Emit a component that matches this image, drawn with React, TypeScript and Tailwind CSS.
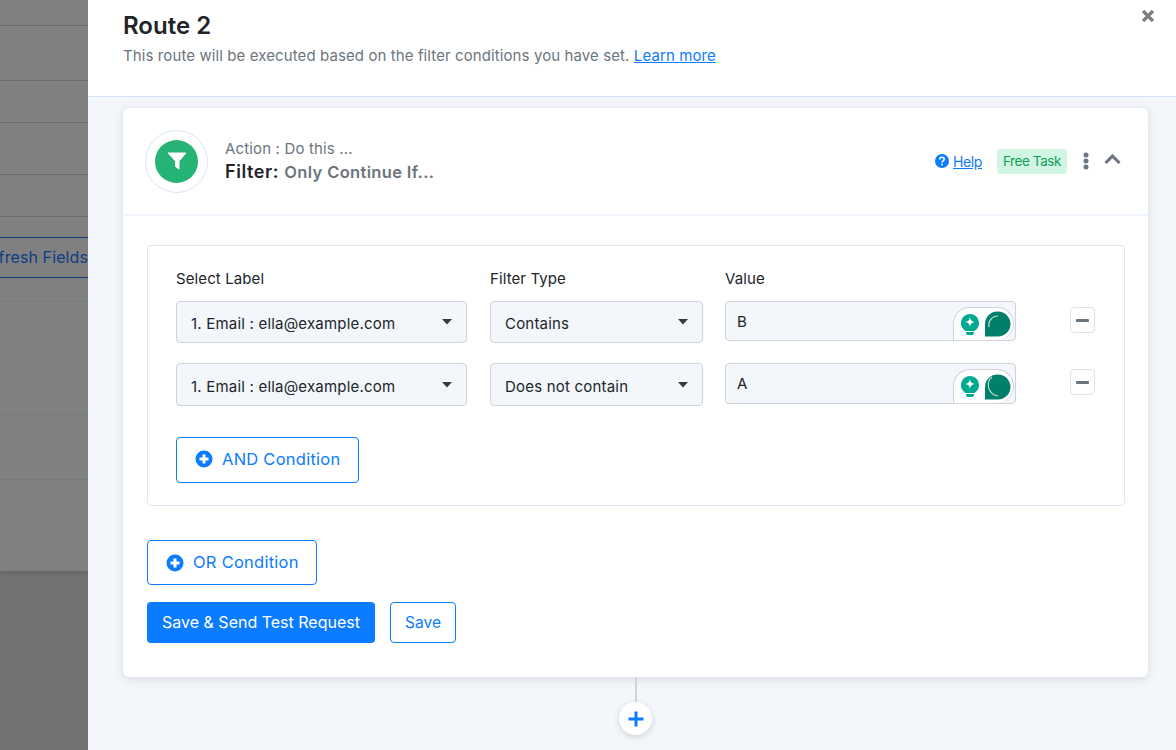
import React from "react";

const font = { fontFamily: 'Inter, "Noto Sans", sans-serif' };

function Caret() {
  return (
    <svg width="10" height="6" viewBox="0 0 10 6" className="shrink-0">
      <path d="M0 0h10L5 5.5z" fill="#343a40" />
    </svg>
  );
}

function PlusCircle({ size = 18 }: { size?: number }) {
  return (
    <svg width={size} height={size} viewBox="0 0 18 18" className="shrink-0">
      <circle cx="9" cy="9" r="8.5" fill="#0b7bff" />
      <path d="M9 4.5v9M4.5 9h9" stroke="#fff" strokeWidth="3" />
    </svg>
  );
}

function Select({ text, w, h }: { text: string; w: string; h: string }) {
  return (
    <div className={`${w} ${h} flex items-center justify-between rounded-[4px] border border-[#ced4da] bg-[#f3f6fa] pl-[14px] pr-[14px] text-[15px] text-[#212529]`}>
      <span className="pt-[5px] tracking-[0.2px] whitespace-nowrap">{text}</span>
      <Caret />
    </div>
  );
}

function ValueInput({ text, flip, h }: { text: string; flip?: boolean; h: string }) {
  return (
    <div className={`w-[291px] ${h} flex items-stretch justify-between rounded-[4px] border border-[#ced4da] bg-[#f3f6fa] text-[15px] text-[#212529]`}>
      <span className="pl-[11px] pt-[9px] leading-[22px]">{text}</span>
      <div className="mt-[5px] mr-[1px] flex w-[61px] items-center gap-[6px] rounded-tl-[18px] rounded-tr-[18px] rounded-br-[18px] border-l border-t border-r border-[#ced4da] bg-white pl-[7px]">
        <svg width="18" height="21" viewBox="0 0 18 21" className="shrink-0">
          <path d="M9 0a9 9 0 0 1 5 16.400V17H4v-.6A9 9 0 0 1 9 0z" fill="#00a98f" />
          <path d="M9 3c.6 3.400 1.600 4.400 5 5-3.400.6-4.400 1.600-5 5-.6-3.400-1.600-4.400-5-5 3.400-.6 4.400-1.600 5-5z" fill="#fff" />
          <path d="M5 18h8v1a2 2 0 0 1-2 2H7a2 2 0 0 1-2-2z" fill="#00a98f" />
        </svg>
        <svg width="26" height="26" viewBox="0 0 26 26" className="shrink-0">
          <path d="M13 0.500a12.500 12.500 0 0 1 0 25H0V13A12.500 12.500 0 0 1 13 0.500z" fill="#00806a" />
          {flip ? (
            <path d="M7 3C1 8 2 20 13 22" stroke="#b9dcd4" strokeWidth="1.200" fill="none" />
          ) : (
            <path d="M4 16C3 10 7 5 13 5" stroke="#b9dcd4" strokeWidth="1.200" fill="none" />
          )}
        </svg>
      </div>
    </div>
  );
}

function Minus() {
  return (
    <div className="flex h-[26px] w-[25px] items-center justify-center rounded-[4px] border border-[#dee2e6] bg-white">
      <div className="h-[3px] w-[13px] rounded-[1px] bg-[#6c757d]" />
    </div>
  );
}

function Row({ first, second, value, flip, mt, h }: { first: string; second: string; value: string; flip?: boolean; mt: string; h: string }) {
  return (
    <div className={`flex items-start ${mt}`}>
      <Select text={first} w="w-[291px]" h={h} />
      <div className="ml-[23px]">
        <Select text={second} w="w-[213px]" h={h} />
      </div>
      <div className="ml-[22px]">
        <ValueInput text={value} flip={flip} h={h === "h-[42px]" ? "h-[40px]" : "h-[41px]"} />
      </div>
      <div className="ml-[54px] mt-[6px]">
        <Minus />
      </div>
    </div>
  );
}

const rows = ["h-[26px]", "h-[55px]", "h-[42px]", "h-[52px]", "h-[42px]"];

export default function App() {
  return (
    <div className="flex h-[750px] w-[1176px] overflow-hidden" style={font}>
      <div className="flex h-full w-[88px] shrink-0 flex-col bg-[#737373]">
        <div className="flex h-[571px] flex-col bg-[#808080] shadow-[0_1px_6px_rgba(0,0,0,0.2)]">
          {rows.map((r) => (
            <div key={r} className={`${r} border-b border-[#6b6b6b]`} />
          ))}
          <div className="mt-[20px] flex h-[41px] items-center justify-end overflow-hidden border-y border-[#0b3d7a] pb-[2px] text-[16px] tracking-[0.1px] whitespace-nowrap text-[#0b3d80]">
            fresh Fields
          </div>
          <div className="h-[24px] border-b border-[#767a7e]" />
          <div className="h-[113px] border-b border-[#767a7e]" />
          <div className="h-[65px] border-b border-[#767a7e]" />
        </div>
      </div>
      <div className="relative flex h-full flex-1 flex-col bg-[#f3f6fa]">
        <header className="h-[97px] shrink-0 border-b border-[#d6e4fb] bg-white pl-[35px] pt-[10px]">
          <h1 className="text-[24px] leading-[32px] font-semibold text-[#212529]">Route 2</h1>
          <p className="mt-[3px] text-[15px] leading-[22px] tracking-[0.1px] whitespace-nowrap text-[#6c757d]">
            This route will be executed based on the filter conditions you have set.{" "}
            <a className="text-[#0b7bff] underline">Learn more</a>
          </p>
        </header>
        <button className="absolute top-[9px] left-[1053px] text-[#7b7f84]">
          <svg width="14" height="14" viewBox="0 0 14 14">
            <path d="M2 2l10 10M12 2L2 12" stroke="currentColor" strokeWidth="3.200" />
          </svg>
        </button>

        <main className="ml-[35px] flex w-[1025px] flex-1 flex-col items-center pt-[11px]">
          <section className="h-[569px] w-[1025px] shrink-0 rounded-[6px] bg-white shadow-[0_2px_10px_rgba(60,70,90,0.16)]">
            <div className="flex h-[108px] items-center border-b-2 border-[#f0f5fd] pr-[27px] pl-[22px]">
              <div className="flex h-[63px] w-[63px] items-center justify-center rounded-full border border-[#d6e4fb]">
                <div className="flex h-[43px] w-[43px] items-center justify-center rounded-full bg-[#25b475]">
                  <svg width="20" height="20" viewBox="0 0 20 20">
                    <path d="M1 2h18l-7 8v8l-3.500-2.500V10z" fill="#fff" stroke="#fff" strokeWidth="1" strokeLinejoin="round" />
                  </svg>
                </div>
              </div>
              <div className="ml-[17px] flex-1 pt-[2px]">
                <div className="-mt-[2px] text-[15px] leading-[22px] tracking-[0.15px] text-[#6c757d]">Action : Do this ...</div>
                <div className="text-[18px] leading-[24px] font-semibold tracking-[0.6px] text-[#212529]">
                  Filter: <span className="text-[16.500px] tracking-[0.35px] text-[#6c757d]">Only Continue If...</span>
                </div>
              </div>
              <div className="flex items-center">
                <svg width="14" height="14" viewBox="0 0 14 14" className="mr-[4px]">
                  <circle cx="7" cy="7" r="7" fill="#0b7bff" />
                  <path d="M4.800 5.400C4.800 4 5.800 3.200 7 3.200s2.200.8 2.200 2c0 1.600-2.200 1.600-2.200 3.200" stroke="#fff" strokeWidth="1.600" fill="none" />
                  <circle cx="7" cy="10.500" r="1" fill="#fff" />
                </svg>
                <a className="text-[14px] tracking-[-0.4px] text-[#0b7bff] underline">Help</a>
                <span className="ml-[15px] flex h-[25px] w-[70px] items-center justify-center rounded-[4px] bg-[#d1f7e4] text-[13.500px] tracking-[-0.4px] whitespace-nowrap text-[#0f9d58]">
                  Free Task
                </span>
                <svg width="6" height="18" viewBox="0 0 6 18" className="ml-[16px]">
                  <circle cx="3" cy="3" r="2.500" fill="#6c757d" />
                  <circle cx="3" cy="9" r="2.500" fill="#6c757d" />
                  <circle cx="3" cy="15" r="2.500" fill="#6c757d" />
                </svg>
                <svg width="17" height="10" viewBox="0 0 17 10" className="mb-[5px] ml-[15px]">
                  <path d="M1.500 9L8.500 2l7 7" stroke="#6c757d" strokeWidth="3" fill="none" />
                </svg>
              </div>
            </div>

            <div className="px-[24px] pt-[29px]">
              <div className="h-[261px] w-[978px] rounded-[4px] border border-[#dee5f3] px-[28px] pt-[22px]">
                <div className="flex text-[15px] leading-[22px] tracking-[0.1px] text-[#212529]">
                  <span className="w-[314px]">Select Label</span>
                  <span className="w-[235px]">Filter Type</span>
                  <span>Value</span>
                </div>
                <Row mt="mt-[11px]" first="1. Email : ella@example.com" second="Contains" value="B" h="h-[42px]" />
                <Row mt="mt-[20px]" first="1. Email : ella@example.com" second="Does not contain" value="A" flip h="h-[43px]" />
                <button className="mt-[31px] flex h-[46px] w-[183px] items-center justify-start gap-[9px] rounded-[4px] border border-[#0b7bff] pb-[2px] pl-[18px] text-[16.500px] tracking-[0.25px] whitespace-nowrap text-[#0b7bff]">
                  <PlusCircle />
                  AND Condition
                </button>
              </div>
              <button className="mt-[34px] flex h-[45px] w-[170px] items-center justify-start gap-[9px] rounded-[4px] border border-[#0b7bff] pl-[18px] text-[16.500px] tracking-[0.25px] whitespace-nowrap text-[#0b7bff]">
                <PlusCircle />
                OR Condition
              </button>
              <div className="mt-[17px] flex gap-[15px]">
                <button className="h-[41px] w-[228px] rounded-[4px] bg-[#0b7bff] pb-[2px] text-[16px] whitespace-nowrap text-white">
                  Save &amp; Send Test Request
                </button>
                <button className="h-[41px] w-[66px] rounded-[4px] border border-[#0b7bff] text-[15.500px] text-[#0b7bff]">
                  Save
                </button>
              </div>
            </div>
          </section>
          <div className="h-[25px] w-[2px] shrink-0 bg-[#ced4da]" />
          <button className="flex h-[33px] w-[33px] shrink-0 items-center justify-center rounded-full bg-white shadow-[0_2px_6px_rgba(60,70,90,0.2)]">
            <svg width="16" height="16" viewBox="0 0 16 16">
              <path d="M8 0.500v15M0.500 8h15" stroke="#0b7bff" strokeWidth="3" />
            </svg>
          </button>
        </main>
      </div>
    </div>
  );
}
